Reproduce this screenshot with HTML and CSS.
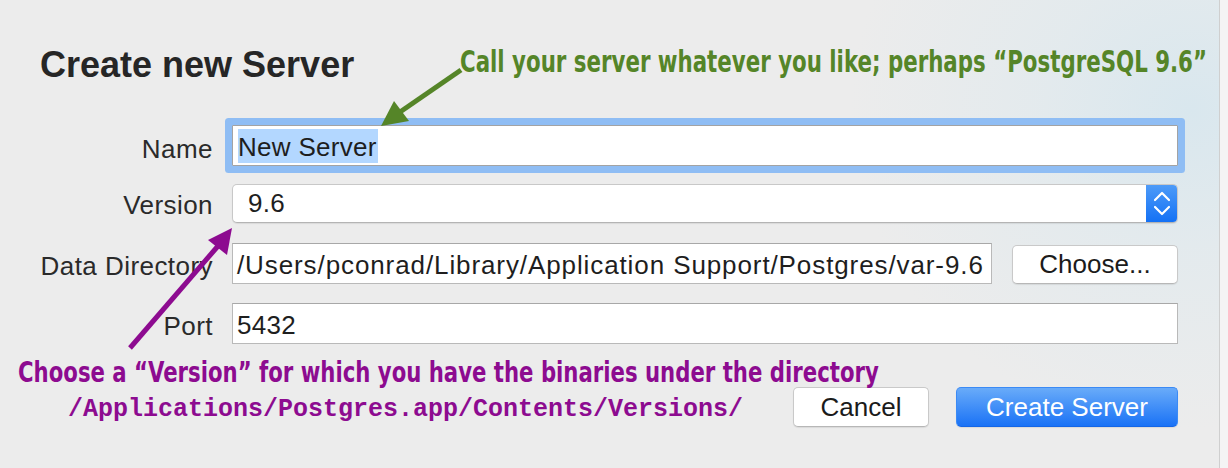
FILE: index.html
```html
<!DOCTYPE html>
<html lang="en">
<head>
<meta charset="utf-8">
<title>Create new Server</title>
<link rel="stylesheet" href="styles.css">
</head>
<body>
<div class="screen">
  <div class="dialog">
    <div class="head">
      <h1 class="title">Create new Server</h1>
      <p class="note note-green">Call your server whatever you like; perhaps “PostgreSQL 9.6”</p>
    </div>
    <div class="form">
      <label class="lbl lbl-name">Name</label>
      <div class="field focused"><span class="sel">New Server</span></div>

      <label class="lbl lbl-version">Version</label>
      <div class="popup">
        <span class="popup-val">9.6</span>
        <span class="stepper">
          <svg width="32" height="39" viewBox="0 0 32 39"><path d="M9 16 L16 9 L23 16" fill="none" stroke="#fff" stroke-width="2.2" stroke-linecap="round" stroke-linejoin="round"/><path d="M9 23 L16 30 L23 23" fill="none" stroke="#fff" stroke-width="2.2" stroke-linecap="round" stroke-linejoin="round"/></svg>
        </span>
      </div>

      <label class="lbl">Data Directory</label>
      <div class="dir-row">
        <div class="field path">/Users/pconrad/Library/Application Support/Postgres/var-9.6</div>
        <button class="btn btn-choose">Choose...</button>
      </div>

      <label class="lbl">Port</label>
      <div class="field">5432</div>
    </div>
    <div class="footer">
      <div class="note-purple">
        <p class="note">Choose a “Version” for which you have the binaries under the directory</p>
        <p class="mono">/Applications/Postgres.app/Contents/Versions/</p>
      </div>
      <div class="actions">
        <button class="btn btn-cancel">Cancel</button>
        <button class="btn btn-primary">Create Server</button>
      </div>
    </div>
    <svg class="arrows" width="1228" height="468" viewBox="0 0 1228 468">
      <line x1="461" y1="70" x2="400" y2="112" stroke="#558528" stroke-width="5"/>
      <polygon points="381,126 394,101 409,121" fill="#558528"/>
      <line x1="130" y1="348" x2="218" y2="246" stroke="#8d0b90" stroke-width="5"/>
      <polygon points="232,228 208,240 227,255" fill="#8d0b90"/>
    </svg>
  </div>
  <div class="edge"></div>
</div>
</body>
</html>
```
FILE: styles.css
```css
* { box-sizing: border-box; }
html, body { margin: 0; padding: 0; }
body {
  width: 1228px;
  height: 468px;
  overflow: hidden;
  font-family: "Liberation Sans", Arial, sans-serif;
  color: #262626;
}
.screen {
  display: flex;
  width: 1228px;
  height: 468px;
}
.dialog {
  position: relative;
  flex: 0 0 1220px;
  width: 1220px;
  min-width: 0;
  height: 468px;
  padding: 44px 41px 0 40px;
  border-right: 1px solid #cfcfcf;
  background:
    radial-gradient(ellipse 340px 320px at 1190px 110px, #d9e7ee 0%, rgba(222,233,238,0.6) 45%, rgba(236,236,236,0) 100%),
    #ececec;
}
.edge {
  flex: 1;
  background: #f4f4f4;
}
.head {
  display: flex;
  align-items: flex-start;
  gap: 106px;
  white-space: nowrap;
  min-width: 0;
}
.title {
  margin: 0;
  flex: none;
  font-size: 36px;
  line-height: 41px;
  font-weight: 700;
  color: #262626;
}
.note {
  margin: 0;
  font-family: "DejaVu Sans Condensed", "DejaVu Sans", sans-serif;
  font-weight: 700;
  font-stretch: condensed;
  white-space: nowrap;
  transform-origin: 0 50%;
}
.note-green {
  flex: none;
  width: 0;
  margin-top: -1px;
  font-size: 31px;
  line-height: 36px;
  color: #558528;
  transform: scaleX(0.765);
}
.form {
  display: grid;
  grid-template-columns: 173px minmax(0, 1fr);
  column-gap: 19px;
  row-gap: 19px;
  align-items: center;
  margin-top: 40px;
}
.lbl {
  text-align: right;
  font-size: 26px;
  line-height: 30px;
  padding-top: 4px;
  letter-spacing: 0.45px;
  color: #2a2a2a;
  white-space: nowrap;
}
.lbl-name { padding-top: 6px; }
.lbl-version { padding-top: 0; }
.field {
  min-width: 0;
  height: 41px;
  background: #fff;
  border: 1px solid #b9b9b9;
  border-top-color: #a8a8a8;
  padding: 3px 4px 0;
  font-size: 26px;
  line-height: 37px;
  letter-spacing: 0.3px;
  color: #1e1e1e;
  white-space: nowrap;
  overflow: hidden;
}
.path { letter-spacing: 0.9px; }
.focused {
  border-radius: 1px;
  border-color: #a3a3a3;
  box-shadow: 0 0 0 7px #8fbdf4;
  padding-left: 5px;
}
.sel {
  background: #b3d7ff;
  padding: 3px 1px 1px 0;
}
.popup {
  display: flex;
  align-items: center;
  height: 39px;
  margin: -1px 0 1px;
  background: #fff;
  border: 1px solid #c8c8c8;
  border-bottom-color: #b4b4b4;
  border-radius: 5px;
  box-shadow: 0 1px 1px rgba(0,0,0,0.08);
  overflow: hidden;
}
.popup-val {
  flex: 1;
  padding-left: 15px;
  font-size: 26px;
  line-height: 37px;
  letter-spacing: 0.3px;
  color: #1e1e1e;
}
.stepper {
  display: flex;
  width: 32px;
  height: 39px;
  margin: -1px -1px -1px 0;
  align-items: center;
  justify-content: center;
  background: linear-gradient(#4f9cf8, #1270f5);
}
.dir-row {
  display: flex;
  align-items: flex-end;
  gap: 20px;
  min-width: 0;
}
.dir-row .field { flex: 1; }
.btn {
  height: 39px;
  flex: none;
  background: #fff;
  border: 1px solid #c9c9c9;
  border-bottom-color: #b7b7b7;
  border-radius: 5px;
  box-shadow: 0 1px 1px rgba(0,0,0,0.08);
  font-family: "Liberation Sans", Arial, sans-serif;
  font-size: 26px;
  color: #1b1b1b;
  padding: 0;
}
.btn-choose { width: 166px; }
.footer {
  display: grid;
  grid-template-columns: minmax(0, 1fr);
}
.footer > * { grid-area: 1 / 1; }
.note-purple {
  margin-left: -22px;
  padding-top: 14px;
  color: #8d0b90;
  min-width: 0;
}
.note-purple .note {
  font-size: 28px;
  line-height: 30px;
  transform: scaleX(0.843);
}
.mono {
  margin: 8px 0 0 50px;
  font-family: "Liberation Mono", "Courier New", monospace;
  font-weight: 700;
  font-size: 25px;
  line-height: 28px;
  white-space: nowrap;
}
.actions {
  justify-self: end;
  align-self: start;
  display: flex;
  gap: 27px;
  margin-top: 43px;
}
.btn-cancel { width: 136px; height: 40px; }
.btn-primary {
  width: 222px;
  height: 40px;
  color: #fff;
  border: 1px solid #3b8af5;
  border-bottom-color: #1566e6;
  background: linear-gradient(#69abf9, #1a72f6);
}
.arrows {
  position: absolute;
  left: 0;
  top: 0;
  pointer-events: none;
}
```
